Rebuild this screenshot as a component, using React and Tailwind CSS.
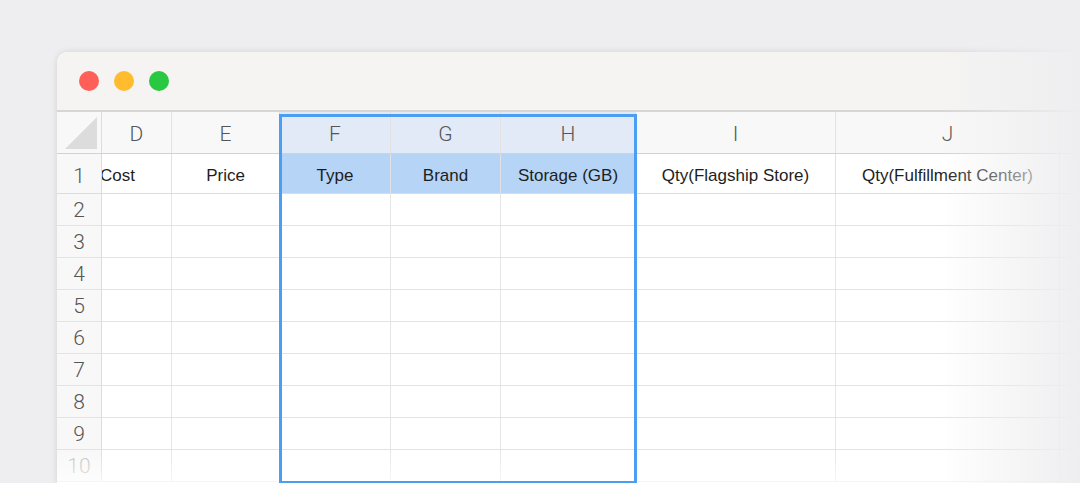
import React from "react";

const cols = [
  { key: "D", w: 70, label: "Cost", clip: true },
  { key: "E", w: 108, label: "Price" },
  { key: "F", w: 111, label: "Type", sel: true },
  { key: "G", w: 110, label: "Brand", sel: true },
  { key: "H", w: 135, label: "Storage (GB)", sel: true },
  { key: "I", w: 200, label: "Qty(Flagship Store)" },
  { key: "J", w: 224, label: "Qty(Fulfillment Center)" },
  { key: "K", w: 200, label: "" },
];

const rows = [2, 3, 4, 5, 6, 7, 8, 9, 10];

const TrafficLights = () => (
  <div className="flex items-center gap-[15px] pl-[22px]">
    <span className="w-5 h-5 rounded-full bg-[#fe5f57]" />
    <span className="w-5 h-5 rounded-full bg-[#febc2e]" />
    <span className="w-5 h-5 rounded-full bg-[#28c840]" />
  </div>
);

const App = () => {
  return (
    <div
      className="w-[1080px] h-[483px] bg-[#eeeef0] overflow-hidden relative pt-[52px] pl-[57px]"
      style={{ fontFamily: '"Liberation Sans", Arial, sans-serif' }}
    >
      <div className="w-[1100px] h-[431px] bg-white rounded-tl-[10px] overflow-hidden shadow-[0_0_6px_rgba(0,0,0,0.12)] relative">
        {/* title bar */}
        <div className="h-[60px] bg-[#f5f4f3] flex items-center border-b-2 border-[#d6d6d6]">
          <TrafficLights />
        </div>

        {/* column letters */}
        <div className="flex h-[42px] border-b border-[#d2d2d2] bg-[#f8f8f8]">
          <div className="w-[45px] shrink-0 border-r border-[#dcdcdc] flex items-end justify-end pr-[4px] pb-[4px]">
            <svg width="32" height="32" viewBox="0 0 32 32">
              <polygon points="32,0 32,32 0,32" fill="#dcdcdc" />
            </svg>
          </div>
          {cols.map((c) => (
            <div
              key={c.key}
              style={{ width: c.w, fontFamily: "Roboto, sans-serif" }}
              className={`shrink-0 border-r border-[#e2e2e2] flex items-center justify-center pt-[4px] text-[21px] font-light text-[#555] ${
                c.sel ? "bg-[#e1eaf6]" : ""
              }`}
            >
              {c.key === "K" ? "" : c.key}
            </div>
          ))}
        </div>

        {/* row 1 */}
        <div className="flex h-[40px] border-b border-[#dcdcdc]">
          <div
            className="w-[45px] shrink-0 border-r border-[#dcdcdc] bg-[#f8f8f8] flex items-end justify-center pb-[1px] text-[21px] font-light text-[#555]"
            style={{ fontFamily: "Roboto, sans-serif" }}
          >
            1
          </div>
          {cols.map((c) => (
            <div
              key={c.key}
              style={{ width: c.w }}
              className={`shrink-0 border-r border-[#e2e2e2] flex items-center overflow-hidden pt-[4px] text-[17px] text-[#1e1e1e] ${
                c.clip ? "justify-start" : "justify-center"
              } ${c.sel ? "bg-[#b5d4f6] border-[#a6c3e4]" : ""}`}
            >
              <span className={c.clip ? "-ml-[2px]" : ""}>{c.label}</span>
            </div>
          ))}
        </div>

        {/* rows 2..10 */}
        {rows.map((r) => (
          <div key={r} className="flex h-[32px] border-b border-[#e3e3e3]">
            <div
              className={`w-[45px] shrink-0 border-r border-[#dcdcdc] bg-[#f8f8f8] flex items-center justify-center pt-[2px] text-[21px] font-light ${
                r === 10 ? "text-[#bdbdbd]" : "text-[#555]"
              }`}
              style={{ fontFamily: "Roboto, sans-serif" }}
            >
              {r}
            </div>
            {cols.map((c) => (
              <div key={c.key} style={{ width: c.w }} className="shrink-0 border-r border-[#e6e6e6]" />
            ))}
          </div>
        ))}

        {/* bottom fade */}
        <div className="absolute left-0 right-0 bottom-0 h-[34px] bg-gradient-to-b from-white/0 to-white/70 pointer-events-none" />

        {/* selection outline */}
        <div className="absolute left-[222px] top-[62px] w-[358px] h-[370px] border-[3px] border-[#4b9ef2] pointer-events-none" />
      </div>

      {/* right fade */}
      <div className="absolute right-0 top-0 bottom-0 w-[140px] bg-gradient-to-r from-[#eeeef0]/0 to-[#eeeef0] pointer-events-none" />
    </div>
  );
};

export default App;
